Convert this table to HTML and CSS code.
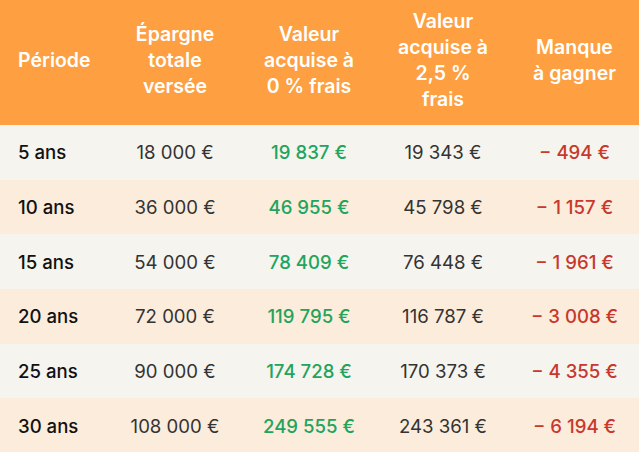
FILE: index.html
```html
<!DOCTYPE html>
<html lang="fr">
<head>
<meta charset="utf-8">
<title>Comparatif frais</title>
<link rel="stylesheet" href="styles.css">
</head>
<body>
<table class="fees">
  <colgroup>
    <col class="c-period">
    <col class="c-num">
    <col class="c-num">
    <col class="c-num">
    <col class="c-last">
  </colgroup>
  <thead>
    <tr>
      <th class="left">Période</th>
      <th>Épargne<br>totale<br>versée</th>
      <th>Valeur<br>acquise à<br>0 % frais</th>
      <th>Valeur<br>acquise à<br>2,5 %<br>frais</th>
      <th>Manque<br>à gagner</th>
    </tr>
  </thead>
  <tbody>
    <tr class="odd"><td class="left">5 ans</td><td>18 000 €</td><td class="gain">19 837 €</td><td>19 343 €</td><td class="loss">− 494 €</td></tr>
    <tr class="even"><td class="left">10 ans</td><td>36 000 €</td><td class="gain">46 955 €</td><td>45 798 €</td><td class="loss">− 1 157 €</td></tr>
    <tr class="odd"><td class="left">15 ans</td><td>54 000 €</td><td class="gain">78 409 €</td><td>76 448 €</td><td class="loss">− 1 961 €</td></tr>
    <tr class="even"><td class="left">20 ans</td><td>72 000 €</td><td class="gain">119 795 €</td><td>116 787 €</td><td class="loss">− 3 008 €</td></tr>
    <tr class="odd"><td class="left">25 ans</td><td>90 000 €</td><td class="gain">174 728 €</td><td>170 373 €</td><td class="loss">− 4 355 €</td></tr>
    <tr class="even"><td class="left">30 ans</td><td>108 000 €</td><td class="gain">249 555 €</td><td>243 361 €</td><td class="loss">− 6 194 €</td></tr>
  </tbody>
</table>
</body>
</html>
```

FILE: styles.css
```css
html, body {
  margin: 0;
  padding: 0;
  background: #ffffff;
}

body {
  font-family: Inter, "Noto Sans", "Liberation Sans", sans-serif;
}

.fees {
  width: 639px;
  border-collapse: collapse;
  table-layout: fixed;
}

.c-period { width: 108px; }
.c-num { width: 134px; }
.c-last { width: 129px; }

.fees th {
  background: #fe9f41;
  color: #ffffff;
  font-weight: 600;
  font-size: 19.5px;
  line-height: 26px;
  height: 125px;
  box-sizing: border-box;
  padding: 0 4px 6px;
  text-align: center;
  vertical-align: middle;
}

.fees td {
  height: 54.67px;
  padding: 0 4px;
  font-size: 18.6px;
  color: #333333;
  text-align: center;
  vertical-align: middle;
  white-space: nowrap;
}

.fees .left {
  text-align: left;
  padding-left: 18px;
}

.fees td.left {
  color: #111111;
  font-weight: 500;
}

.odd td { background: #f5f4ee; }
.even td { background: #fbecdc; }

.fees td.gain {
  color: #22a45d;
  font-weight: 500;
}

.fees td.loss {
  color: #c8382c;
  font-weight: 500;
}
```
